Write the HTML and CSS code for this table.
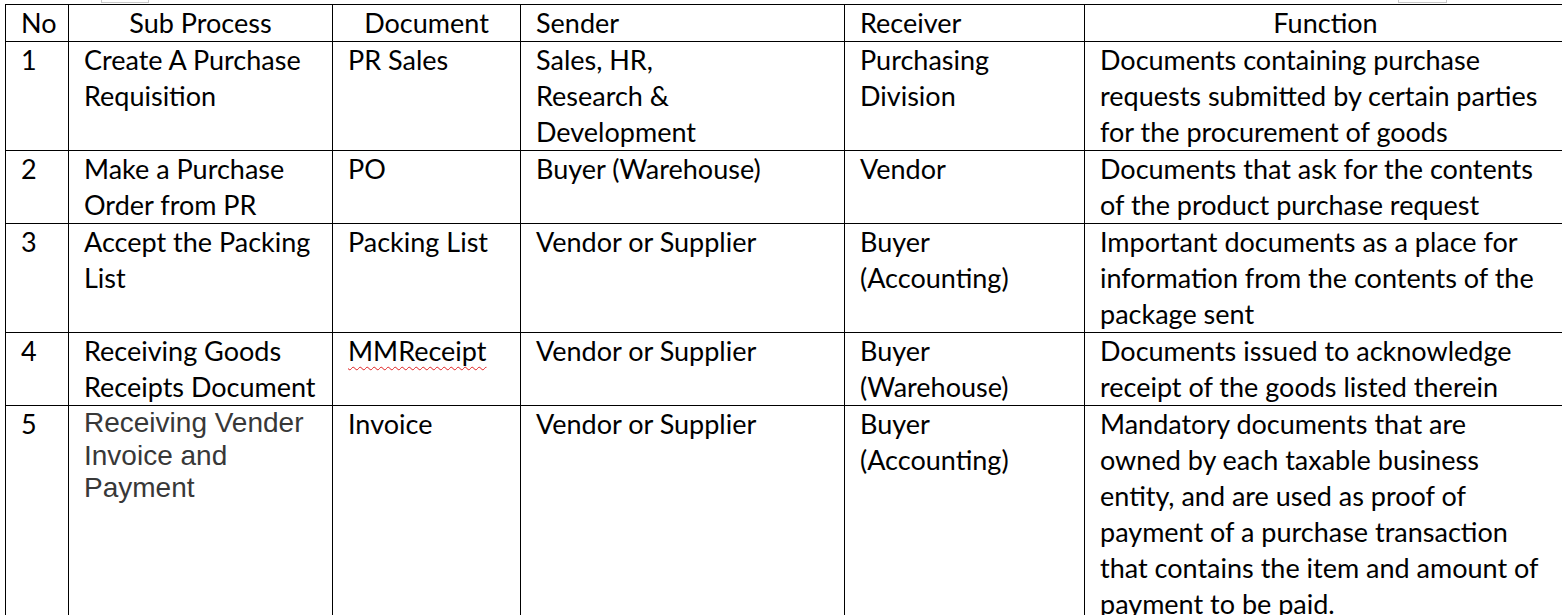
FILE: index.html
```html
<!DOCTYPE html>
<html>
<head>
<meta charset="utf-8">
<link rel="stylesheet" href="styles.css">
</head>
<body>
<div class="page">
  <span class="marker marker-left"></span>
  <span class="marker marker-right"></span>
  <table class="doc-table">
    <colgroup>
      <col class="c-no"><col class="c-sub"><col class="c-doc"><col class="c-send"><col class="c-recv"><col class="c-func">
    </colgroup>
    <thead>
      <tr>
        <th class="left">No</th>
        <th class="center">Sub Process</th>
        <th class="center">Document</th>
        <th class="left">Sender</th>
        <th class="left">Receiver</th>
        <th class="center">Function</th>
      </tr>
    </thead>
    <tbody>
      <tr>
        <td>1</td>
        <td>Create A Purchase<br>Requisition</td>
        <td>PR Sales</td>
        <td>Sales, HR,<br>Research &amp;<br>Development</td>
        <td>Purchasing<br>Division</td>
        <td>Documents containing purchase<br>requests submitted by certain parties<br>for the procurement of goods</td>
      </tr>
      <tr>
        <td>2</td>
        <td>Make a Purchase<br>Order from PR</td>
        <td>PO</td>
        <td>Buyer (Warehouse)</td>
        <td>Vendor</td>
        <td>Documents that ask for the contents<br>of the product purchase request</td>
      </tr>
      <tr>
        <td>3</td>
        <td>Accept the Packing<br>List</td>
        <td>Packing List</td>
        <td>Vendor or Supplier</td>
        <td>Buyer<br>(Accounting)</td>
        <td>Important documents as a place for<br>information from the contents of the<br>package sent</td>
      </tr>
      <tr>
        <td>4</td>
        <td>Receiving Goods<br>Receipts Document</td>
        <td><span class="spell">MMReceipt</span></td>
        <td>Vendor or Supplier</td>
        <td>Buyer<br>(Warehouse)</td>
        <td>Documents issued to acknowledge<br>receipt of the goods listed therein</td>
      </tr>
      <tr>
        <td>5</td>
        <td class="arial">Receiving Vender<br>Invoice and<br>Payment</td>
        <td>Invoice</td>
        <td>Vendor or Supplier</td>
        <td>Buyer<br>(Accounting)</td>
        <td>Mandatory documents that are<br>owned by each taxable business<br>entity, and are used as proof of<br>payment of a purchase transaction<br>that contains the item and amount of<br>payment to be paid.</td>
      </tr>
    </tbody>
  </table>
</div>
</body>
</html>
```

FILE: styles.css
```css
html, body {
  margin: 0;
  padding: 0;
  overflow: hidden;
  background: #ffffff;
}

.page {
  position: relative;
  padding: 4px 0 0 5px;
  width: 1570px;
}

.marker {
  position: absolute;
  top: 0;
  height: 2px;
  border: 1px solid #c8c8c8;
  border-top: none;
}

.marker-left {
  left: 101px;
  width: 46px;
}

.marker-right {
  left: 1398px;
  width: 47px;
}

.doc-table {
  border-collapse: collapse;
  table-layout: fixed;
  width: 1561px;
  font-family: "Lato", "Carlito", "Liberation Sans", sans-serif;
  font-size: 27px;
  line-height: 36px;
  color: #000000;
}

.c-no { width: 63px; }
.c-sub { width: 264px; }
.c-doc { width: 188px; }
.c-send { width: 324px; }
.c-recv { width: 240px; }
.c-func { width: 482px; }

.doc-table th,
.doc-table td {
  border: 1px solid #000000;
  padding: 0 15px;
  vertical-align: top;
  white-space: nowrap;
  text-align: left;
  font-weight: normal;
}

.doc-table th.center {
  text-align: center;
}

.doc-table td.arial {
  font-family: "Liberation Sans", Arial, sans-serif;
  font-size: 28px;
  line-height: 32.5px;
  color: #383838;
  padding-top: 1px;
}

.spell {
  text-decoration: underline wavy #e02020;
  text-decoration-thickness: 1px;
  text-underline-offset: 5px;
}
```
